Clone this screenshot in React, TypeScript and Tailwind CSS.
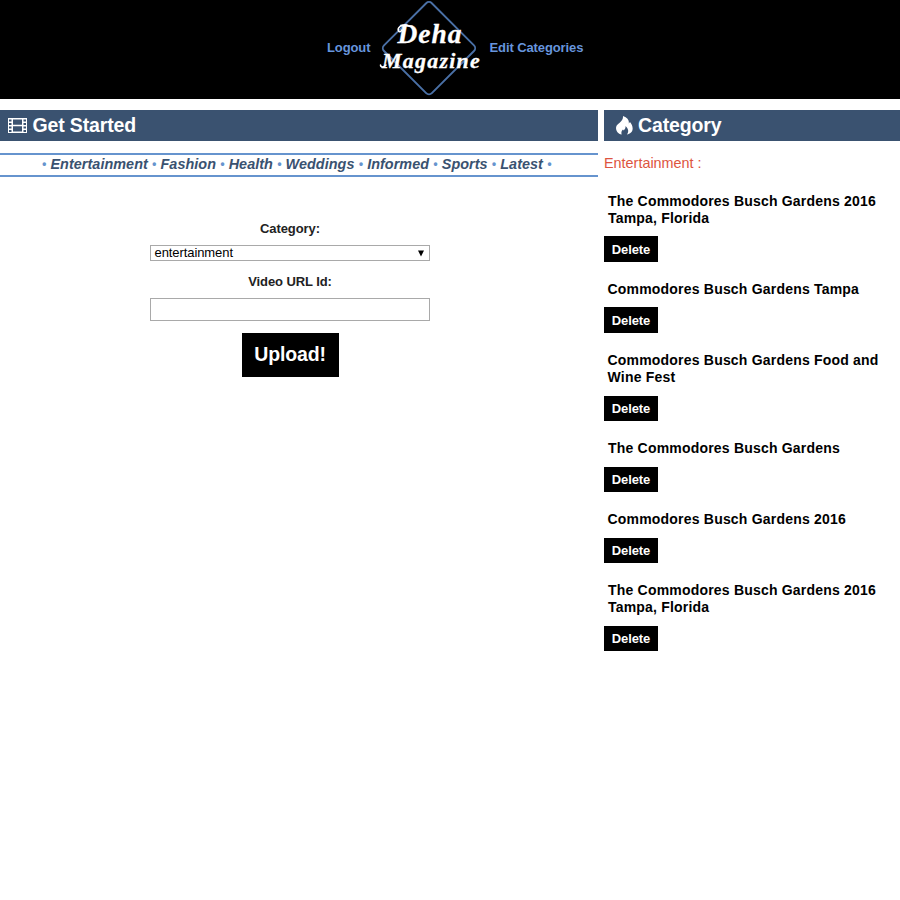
import React from "react";

const categories = ["Entertainment", "Fashion", "Health", "Weddings", "Informed", "Sports", "Latest"];

const videos = [
  { title: "The Commodores Busch Gardens 2016 Tampa, Florida", block: "h-[88px]", button: "mt-[9px] h-[26px]", text: "pl-[4px]" },
  { title: "Commodores Busch Gardens Tampa", block: "h-[71px]", button: "mt-[9px] h-[26px]", text: "pl-[3.5px]" },
  { title: "Commodores Busch Gardens Food and Wine Fest", block: "h-[88px]", button: "mt-[10px] h-[25px]", text: "pl-[3.5px]" },
  { title: "The Commodores Busch Gardens", block: "h-[71px]", button: "mt-[10px] h-[25px]", text: "pl-[4px]" },
  { title: "Commodores Busch Gardens 2016", block: "h-[71px]", button: "mt-[10px] h-[25px]", text: "pl-[3.5px]" },
  { title: "The Commodores Busch Gardens 2016 Tampa, Florida", block: "h-[88px]", button: "mt-[10px] h-[25px]", text: "pl-[4px]" },
];

function Logo() {
  return (
    <svg width="102" height="98" viewBox="0 0 102 98" className="shrink-0">
      <rect x="16.2" y="14.400" width="67.600" height="67.600" rx="4" fill="none" stroke="#4a70a6" strokeWidth="1.9" transform="rotate(45 50 48.2)" />
      <g fill="#fff" stroke="#fff" strokeWidth="0.3" fontStyle="italic" fontWeight="bold" fontFamily="'Liberation Serif', serif">
        <text x="18.5" y="42.5" fontSize="27" textLength="65" lengthAdjust="spacingAndGlyphs" letterSpacing="1">Deha</text>
        <text x="3" y="67.500" fontSize="20.5" textLength="99" lengthAdjust="spacingAndGlyphs" letterSpacing="1.2">Magazine</text>
      </g>
      <g fill="none" stroke="#fff" strokeWidth="1.5" strokeLinecap="round">
        <path d="M28 25C22 24 18 28 19.500 31c1 1.500 3 .5 3-1" />
        <path d="M1.500 65c0 2.500 3.500 2.500 5.500 0" />
      </g>
    </svg>
  );
}

function Film() {
  return (
    <svg width="19" height="15" viewBox="0 0 19 15" className="mr-[5.5px] shrink-0">
      <path fill="#fff" fillRule="evenodd" d="M0 0h19v15H0zM1 1.500v2h2.500v-2zM1 5v2h2.500V5zM1 8.500v2h2.500v-2zM1 12v2h2.500v-2zM15.500 1.500v2H18v-2zM15.500 5v2H18V5zM15.500 8.500v2H18v-2zM15.500 12v2H18v-2zM5 1.500v5.200h9V1.500zM5 8.300v5.200h9V8.300z" />
    </svg>
  );
}

function Flame() {
  return (
    <svg width="17" height="19" viewBox="0 0 17 19" fill="#fff" className="mr-[5px] shrink-0">
      <path d="M7 0C12 2 13.4 4.5 12.7 7.5L14 6C16.5 9 18 13.5 15 16.5C13.8 17.7 12.4 18.3 11 18.5C13 15.8 12.5 12.5 9.5 10C9.8 12 9 13.2 7.8 14.5L7 13.5C5.5 15 5 16.5 5.7 18.5C1.5 17.5-.6 14 .2 10.8C1.2 6.9 7.5 6 7 0Z" />
    </svg>
  );
}

export default function App() {
  return (
    <div className="min-h-[900px] w-full bg-white font-['Liberation_Sans',Arial,sans-serif]">
      <header className="flex h-[99px] bg-black pl-[327px] text-[13px] leading-[16px] font-bold tracking-[-0.1px] text-[#6795dd]">
        <a className="mt-[40px] w-[52px]">Logout</a>
        <Logo />
        <a className="mt-[40px] ml-[8.5px] whitespace-nowrap">Edit Categories</a>
      </header>
      <div className="mt-[11px] flex gap-[6px]">
        <main className="w-[598px]">
          <h1 className="flex h-[31px] items-center bg-[#3a5270] pl-[8px] text-[19.5px] font-bold tracking-[-0.15px] text-white">
            <Film />
            Get Started
          </h1>
          <nav className="mt-[12px] flex h-[24px] items-center gap-[4.2px] border-y-2 border-[#6694ce] pb-[2px] pl-[42px] text-[14.4px] leading-[18px] font-bold tracking-[0.05px] text-[#6694ce] italic">
            <span className="text-[12px]">•</span>
            {categories.map((name) => (
              <React.Fragment key={name}>
                <a className="text-[#3a5270]">{name}</a>
                <span className="text-[12px]">•</span>
              </React.Fragment>
            ))}
          </nav>
          <form className="ml-[150px] flex w-[280px] flex-col items-center pt-[44px] text-[13px] leading-[16px] tracking-[-0.08px] text-[#222]">
            <label className="font-bold">Category:</label>
            <div className="mt-[8px] flex h-[16px] w-full items-center justify-between border border-[#a9a9a9] pr-[4px] pl-[3.5px] leading-[14px] text-black">
              <span>entertainment</span>
              <svg width="8" height="7" viewBox="0 0 8 7"><path d="M1 0.5h6L4 6.5z" /></svg>
            </div>
            <label className="mt-[13px] font-bold">Video URL Id:</label>
            <input className="mt-[8px] h-[23px] w-full border border-[#a9a9a9]" />
            <button type="button" className="mt-[12px] h-[44px] w-[97px] bg-black pb-[3px] text-[19.5px] font-bold tracking-[-0.15px] text-white">Upload!</button>
          </form>
        </main>
        <aside className="w-[296px]">
          <h1 className="flex h-[31px] items-center bg-[#3a5270] pl-[12px] text-[19.5px] font-bold tracking-[-0.15px] text-white">
            <Flame />
            Category
          </h1>
          <p className="mt-[13px] text-[14.4px] leading-[18px] text-[#dd5440]">Entertainment :</p>
          <div className="mt-[21px]">
            {videos.map((video, index) => (
              <section key={index} className={`flex flex-col items-start ${video.block}`}>
                <h2 className={`text-[14px] leading-[17px] font-bold tracking-[0.2px] text-black ${video.text}`}>{video.title}</h2>
                <button type="button" className={`w-[54px] shrink-0 bg-black pt-px text-[13px] leading-[16px] font-bold tracking-[-0.1px] text-white ${video.button}`}>Delete</button>
              </section>
            ))}
          </div>
        </aside>
      </div>
    </div>
  );
}
